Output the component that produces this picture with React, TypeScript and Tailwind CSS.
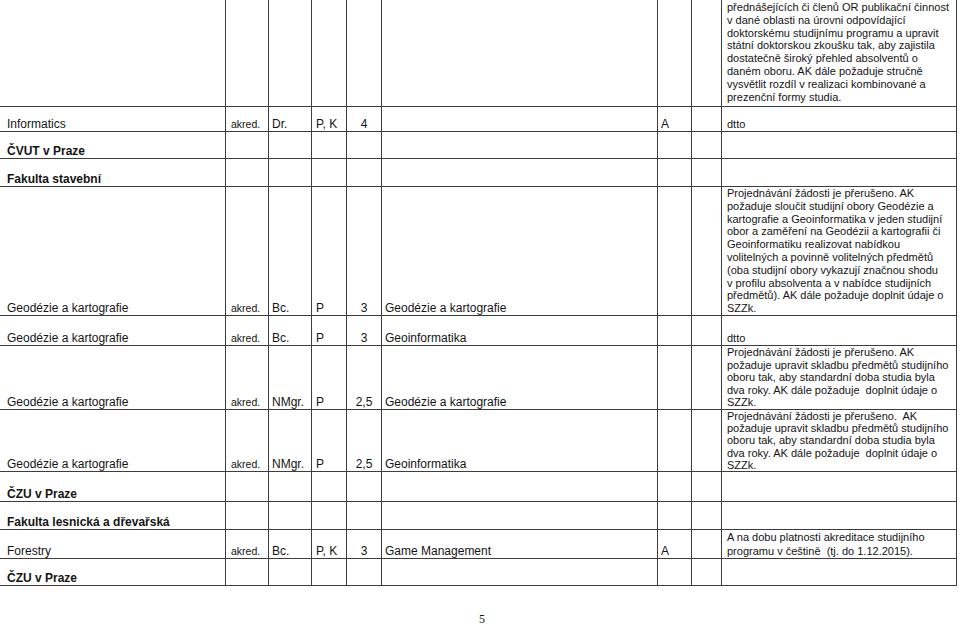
type Cells = {
  name?: string;
  bold?: boolean;
  akred?: string;
  level?: string;
  form?: string;
  years?: string;
  program?: string;
  a?: string;
  notes?: string[];
  notesTop?: boolean;
  leading?: string;
  pad?: string;
};

const rows: { h: string; c: Cells }[] = [
  {
    h: "h-[107px]",
    c: {
      notes: [
        "přednášejících či členů OR publikační činnost",
        "v dané oblasti na úrovni odpovídající",
        "doktorskému studijnímu programu a upravit",
        "státní doktorskou zkoušku tak, aby zajistila",
        "dostatečně široký přehled absolventů o",
        "daném oboru. AK dále požaduje stručně",
        "vysvětlit rozdíl v realizaci kombinované a",
        "prezenční formy studia.",
      ],
      notesTop: true,
      leading: "leading-[12.8px]",
      pad: "pt-[1px]",
    },
  },
  {
    h: "h-[25px]",
    c: { name: "Informatics", akred: "akred.", level: "Dr.", form: "P, K", years: "4", a: "A", notes: ["dtto"] },
  },
  { h: "h-[27px]", c: { name: "ČVUT v Praze", bold: true } },
  { h: "h-[28px]", c: { name: "Fakulta stavební", bold: true } },
  {
    h: "h-[129px]",
    c: {
      name: "Geodézie a kartografie",
      akred: "akred.",
      level: "Bc.",
      form: "P",
      years: "3",
      program: "Geodézie a kartografie",
      notes: [
        "Projednávání žádosti je přerušeno. AK",
        "požaduje sloučit studijní obory Geodézie a",
        "kartografie a Geoinformatika v jeden studijní",
        "obor a zaměření na Geodézii a kartografii či",
        "Geoinformatiku realizovat nabídkou",
        "volitelných a povinně volitelných předmětů",
        "(oba studijní obory vykazují značnou shodu",
        "v profilu absolventa a v nabídce studijních",
        "předmětů). AK dále požaduje doplnit údaje o",
        "SZZk.",
      ],
      notesTop: true,
      leading: "leading-[12.8px]",
      pad: "pt-0",
    },
  },
  {
    h: "h-[30px]",
    c: {
      name: "Geodézie a kartografie",
      akred: "akred.",
      level: "Bc.",
      form: "P",
      years: "3",
      program: "Geoinformatika",
      notes: ["dtto"],
    },
  },
  {
    h: "h-[64px]",
    c: {
      name: "Geodézie a kartografie",
      akred: "akred.",
      level: "NMgr.",
      form: "P",
      years: "2,5",
      program: "Geodézie a kartografie",
      notes: [
        "Projednávání žádosti je přerušeno. AK",
        "požaduje upravit skladbu předmětů studijního",
        "oboru tak, aby standardní doba studia byla",
        "dva roky. AK dále požaduje  doplnit údaje o",
        "SZZk.",
      ],
      leading: "leading-[12.6px]",
      pad: "pb-0",
    },
  },
  {
    h: "h-[61px]",
    c: {
      name: "Geodézie a kartografie",
      akred: "akred.",
      level: "NMgr.",
      form: "P",
      years: "2,5",
      program: "Geoinformatika",
      notes: [
        "Projednávání žádosti je přerušeno.  AK",
        "požaduje upravit skladbu předmětů studijního",
        "oboru tak, aby standardní doba studia byla",
        "dva roky. AK dále požaduje  doplnit údaje o",
        "SZZk.",
      ],
      leading: "leading-[12.2px]",
      pad: "pb-0",
    },
  },
  { h: "h-[31px]", c: { name: "ČZU v Praze", bold: true } },
  { h: "h-[28px]", c: { name: "Fakulta lesnická a dřevařská", bold: true } },
  {
    h: "h-[28px]",
    c: {
      name: "Forestry",
      akred: "akred.",
      level: "Bc.",
      form: "P, K",
      years: "3",
      program: "Game Management",
      a: "A",
      notes: ["A na dobu platnosti akreditace studijního", "programu v češtině  (tj. do 1.12.2015)."],
      notesTop: true,
      leading: "leading-[14px]",
      pad: "pt-0",
    },
  },
  { h: "h-[28px]", c: { name: "ČZU v Praze", bold: true } },
];

function Cell({ children, className = "" }: { children?: React.ReactNode; className?: string }) {
  return (
    <div className={`flex flex-col justify-end border-r border-b border-[#3d3d3d] leading-[14px] ${className}`}>
      {children}
    </div>
  );
}

function Row({ h, c }: { h: string; c: Cells }) {
  return (
    <div className={`grid grid-cols-[226px_43px_43px_35px_35px_276px_34px_30px_235px] ${h}`}>
      <Cell className={`pl-[7px] text-[12px] whitespace-nowrap ${c.bold ? "font-bold" : ""}`}>{c.name}</Cell>
      <Cell className="pl-[5px] text-[10.5px]">{c.akred}</Cell>
      <Cell className="pl-[3px] text-[12px]">{c.level}</Cell>
      <Cell className="pl-[4px] text-[12px] whitespace-nowrap">{c.form}</Cell>
      <Cell className="text-center text-[12px]">{c.years}</Cell>
      <Cell className="pl-[3px] text-[12px]">{c.program}</Cell>
      <Cell className="pl-[3px] text-[12px]">{c.a}</Cell>
      <Cell />
      <div
        className={`flex flex-col border-r border-b border-[#3d3d3d] pl-[5px] text-[11px] ${
          c.notesTop ? "justify-start" : "justify-end"
        } ${c.leading ?? "leading-[14px]"} ${c.pad ?? "pb-0"}`}
      >
        {c.notes?.map((line, i) => (
          <div key={i} className="whitespace-pre">
            {line}
          </div>
        ))}
      </div>
    </div>
  );
}

export default function App() {
  return (
    <div className="h-[626px] w-[960px] overflow-hidden bg-white text-[#141414] [font-family:'Liberation_Sans',Arial,sans-serif]">
      <div className="w-[957px]">
        {rows.map((r, i) => (
          <Row key={i} h={r.h} c={r.c} />
        ))}
      </div>
      <div className="mt-[26px] pl-[479px] text-[12px] leading-[14px] [font-family:'Liberation_Serif','Times_New_Roman',serif]">
        5
      </div>
    </div>
  );
}
